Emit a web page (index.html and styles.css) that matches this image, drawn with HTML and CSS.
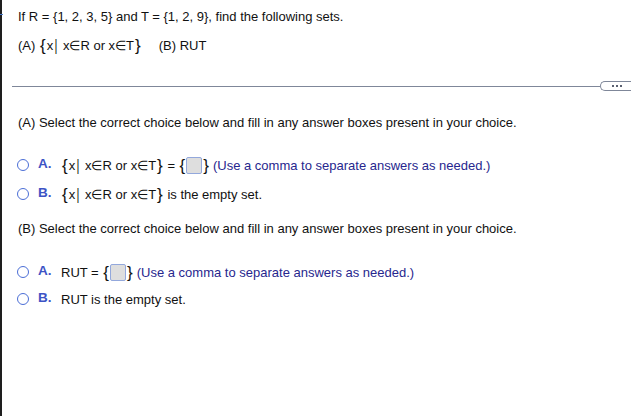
FILE: index.html
```html
<!DOCTYPE html>
<html>
<head>
<meta charset="utf-8">
<link rel="stylesheet" href="styles.css">
</head>
<body>
<div class="page">
  <div class="question">
    <p class="line first">If R = {1, 2, 3, 5} and T = {1, 2, 9}, find the following sets.</p>
    <p class="line second">(A) <span class="setb"><span class="br">{</span>x<span class="bar">|</span> x∈R or x∈T<span class="br">}</span></span><span class="gap"></span>(B) RUT</p>
  </div>
  <div class="divider">
    <div class="rule"></div>
    <div class="more"><span></span><span></span><span></span></div>
  </div>
  <div class="part">
    <p class="line prompt">(A) Select the correct choice below and fill in any answer boxes present in your choice.</p>
    <div class="choice c1">
      <span class="radio"></span><span class="lbl">A.</span>
      <span class="body"><span class="br">{</span>x<span class="bar">|</span> x∈R or x∈T<span class="br">}</span> = <span class="br">{</span><span class="box"></span><span class="br">}</span> <span class="hint">(Use a comma to separate answers as needed.)</span></span>
    </div>
    <div class="choice c2">
      <span class="radio"></span><span class="lbl">B.</span>
      <span class="body"><span class="br">{</span>x<span class="bar">|</span> x∈R or x∈T<span class="br">}</span> is the empty set.</span>
    </div>
    <p class="line prompt p2">(B) Select the correct choice below and fill in any answer boxes present in your choice.</p>
    <div class="choice c3">
      <span class="radio"></span><span class="lbl">A.</span>
      <span class="body">RUT = <span class="br">{</span><span class="box"></span><span class="br">}</span> <span class="hint">(Use a comma to separate answers as needed.)</span></span>
    </div>
    <div class="choice c4">
      <span class="radio"></span><span class="lbl">B.</span>
      <span class="body">RUT is the empty set.</span>
    </div>
  </div>
</div>
</body>
</html>
```
FILE: styles.css
```css
html, body {
  margin: 0;
  padding: 0;
  background: #fff;
}
body {
  font-family: "Liberation Sans", Arial, sans-serif;
  font-size: 13px;
  color: #111;
}
.page {
  border-left: 2px solid #1e1e1e;
  height: 416px;
  box-sizing: border-box;
  padding-left: 16px;
  position: relative;
}
.page::before {
  content: "";
  position: absolute;
  left: -2px;
  top: 14px;
  width: 3px;
  height: 1px;
  background: #4a78c8;
}
.line {
  margin: 0;
  line-height: 15px;
}
.first {
  padding-top: 9px;
}
.second {
  margin-top: 14px;
  display: flex;
  align-items: center;
  height: 15px;
  white-space: pre;
}
.gap {
  display: inline-block;
  width: 17px;
}
.br {
  font-size: 17px;
  line-height: 15px;
  display: inline-block;
  padding: 0 1px;
  vertical-align: -1px;
}
.bar {
  font-size: 16px;
  display: inline-block;
  transform: scaleX(0.7);
  margin: 0 1px 0 1px;
  vertical-align: -1px;
  line-height: 15px;
}
.setb {
  margin-left: 0;
}
.divider {
  display: flex;
  align-items: center;
  margin-left: -6px;
  margin-top: 28px;
  height: 10px;
}
.rule {
  flex: 1;
  height: 1px;
  background: #7f8799;
}
.more {
  width: 31px;
  height: 10px;
  border: 1px solid #7f8799;
  border-right: none;
  border-radius: 5px 0 0 5px;
  display: flex;
  align-items: center;
  justify-content: center;
  gap: 2px;
  box-sizing: border-box;
  padding-left: 2px;
}
.more span {
  width: 2px;
  height: 2px;
  background: #5a6070;
}
.prompt {
  margin-top: 24px;
}
.p2 {
  margin-top: 18px;
}
.choice {
  display: flex;
  align-items: center;
  height: 18px;
}
.c1 { margin-top: 26px; }
.c2 { margin-top: 11px; }
.c3 { margin-top: 27px; }
.c4 { margin-top: 9px; }
.radio {
  width: 10px;
  height: 10px;
  border: 1.3px solid #4b6ed6;
  border-radius: 50%;
  margin-left: -1px;
  box-sizing: content-box;
}
.lbl {
  color: #3d53c5;
  font-weight: bold;
  font-size: 13.5px;
  margin-left: 9px;
  width: 23px;
  position: relative;
  top: -2px;
}
.body {
  display: flex;
  align-items: center;
  white-space: pre;
}
.box {
  display: inline-block;
  width: 14px;
  height: 15px;
  background: #dedede;
  border: 1px solid #93a8dc;
  border-radius: 2px;
  margin: 0;
}
.hint {
  color: #27278e;
  margin-left: 3px;
}
```
